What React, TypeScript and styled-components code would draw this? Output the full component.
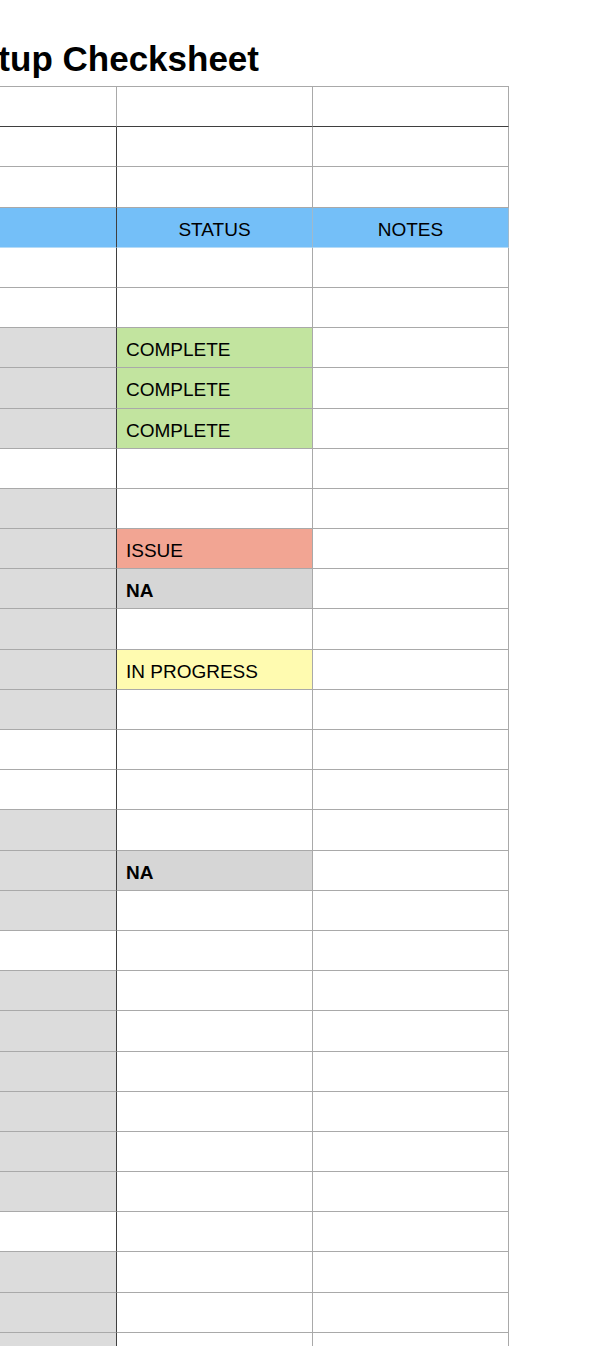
import React from "react"
import styled, { createGlobalStyle } from "styled-components"

const GlobalStyle = createGlobalStyle`
  html, body {
    margin: 0;
    padding: 0;
    background: #fff;
    overflow-x: hidden;
  }
  body {
    font-family: "Liberation Sans", Arial, Helvetica, sans-serif;
    color: #000;
  }
`

type Tone = "white" | "grey" | "head"
type Status = "complete" | "issue" | "na" | "progress"

interface RowData {
  left: Tone
  status?: Status
}

const statusText: Record<Status, string> = {
  complete: "COMPLETE",
  issue: "ISSUE",
  na: "NA",
  progress: "IN PROGRESS",
}

const statusColor: Record<Status, string> = {
  complete: "#c2e49f",
  issue: "#f2a593",
  na: "#d6d6d6",
  progress: "#fffbb0",
}

const rows: RowData[] = [
  { left: "white" },
  { left: "white" },
  { left: "head" },
  { left: "white" },
  { left: "white" },
  { left: "grey", status: "complete" },
  { left: "grey", status: "complete" },
  { left: "grey", status: "complete" },
  { left: "white" },
  { left: "grey" },
  { left: "grey", status: "issue" },
  { left: "grey", status: "na" },
  { left: "grey" },
  { left: "grey", status: "progress" },
  { left: "grey" },
  { left: "white" },
  { left: "white" },
  { left: "grey" },
  { left: "grey", status: "na" },
  { left: "grey" },
  { left: "white" },
  { left: "grey" },
  { left: "grey" },
  { left: "grey" },
  { left: "grey" },
  { left: "grey" },
  { left: "grey" },
  { left: "white" },
  { left: "grey" },
  { left: "grey" },
  { left: "grey" },
]

// sheet is scrolled: most of the first column sits off the left edge
const Sheet = styled.div`
  margin-left: -283px;
  width: 792px;
`

const TitleBar = styled.div`
  display: flex;
  justify-content: flex-end;
  width: 542px;
  height: 47px;
  padding-top: 39px;
  white-space: nowrap;
`

const Title = styled.h1`
  margin: 0;
  font-size: 35px;
  line-height: 40px;
  font-weight: bold;
`

const Grid = styled.div`
  display: grid;
  grid-template-columns: 400px 196px 196px;
  grid-auto-rows: 40.2px;
  border-top: 1px solid #a9a9a9;
`

const Cell = styled.div<{ $bg?: string; $dark?: boolean; $bottomDark?: boolean; $center?: boolean; $bold?: boolean; $soft?: boolean }>`
  box-sizing: border-box;
  display: flex;
  align-items: center;
  justify-content: ${(p) => (p.$center ? "center" : "flex-start")};
  padding-top: 5px;
  padding-left: ${(p) => (p.$center ? "0" : "9px")};
  background: ${(p) => p.$bg || "#fff"};
  border-right: 1px solid ${(p) => (p.$dark ? "#3f3f3f" : p.$soft ? "#9fb9cc" : "#a9a9a9")};
  border-bottom: 1px solid ${(p) => (p.$bottomDark ? "#3f3f3f" : p.$soft ? "#b5dbf7" : "#a9a9a9")};
  font-size: 19px;
  font-weight: ${(p) => (p.$bold ? "bold" : "normal")};
  white-space: nowrap;
`

const leftBg: Record<Tone, string> = {
  white: "#fff",
  grey: "#dcdcdc",
  head: "#74bff8",
}

export default function App() {
  return (
    <>
      <GlobalStyle />
      <Sheet>
        <TitleBar>
          <Title>Startup Checksheet</Title>
        </TitleBar>
        <Grid>
          <Cell $bottomDark />
          <Cell $bottomDark />
          <Cell $bottomDark />
          {rows.map((r, i) => {
            const head = r.left === "head"
            return (
              <React.Fragment key={i}>
                <Cell $bg={leftBg[r.left]} $dark $soft={head} />
                <Cell
                  $bg={head ? "#74bff8" : r.status ? statusColor[r.status] : "#fff"}
                  $center={head}
                  $soft={head}
                  $bold={r.status === "na"}
                >
                  {head ? "STATUS" : r.status ? statusText[r.status] : ""}
                </Cell>
                <Cell $bg={head ? "#74bff8" : "#fff"} $center={head} $soft={head}>
                  {head ? "NOTES" : ""}
                </Cell>
              </React.Fragment>
            )
          })}
        </Grid>
      </Sheet>
    </>
  )
}
